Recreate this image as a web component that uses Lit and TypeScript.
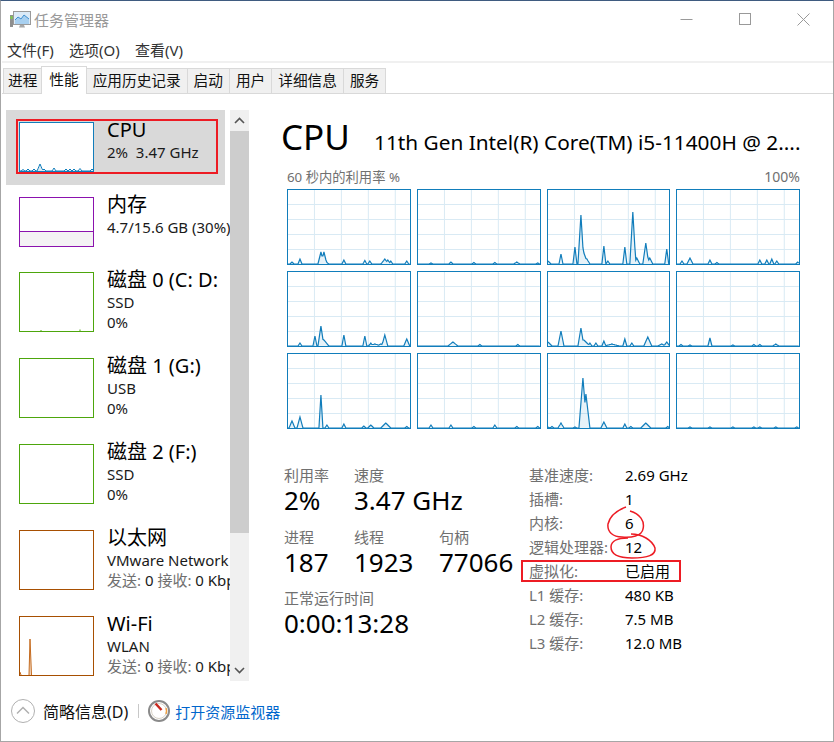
import { LitElement, html, css, svg } from "lit";
import { customElement } from "lit/decorators.js";

// [x, height, half width] of each spike on a sparkline, in chart pixels
type Peak = [number, number, number?];

const CORES: Peak[][] = [
  [[4, 2], [12, 5], [33, 12, 3], [36, 12, 3], [39, 1.5], [56, 4], [77, 3.5], [82, 3], [97, 5, 4], [100, 4, 3], [103, 3], [119, 3]],
  [[13, 1], [33, 2], [56, 1.5], [77, 1.5], [99, 2, 3], [120, 1]],
  [[0, 3, 3], [13, 10], [27, 17], [33, 49, 3], [36, 11, 4], [39, 5, 3], [56, 18], [60, 3], [77, 17], [85, 52, 3], [89, 6, 3], [98, 21, 3], [102, 6, 3], [119, 15]],
  [[5, 3], [13, 6, 3], [33, 4], [40, 1.5], [83, 4], [90, 4], [95, 5], [100, 3], [121, 2]],
  [[12, 3], [27, 10], [33, 20, 3], [36, 6, 5], [56, 11], [77, 10], [83, 3], [87, 2, 8], [93, 2, 4], [97, 11, 3], [119, 7, 3]],
  [[35, 4, 5], [62, 1.5], [100, 1.5]],
  [[0, 4, 4], [13, 15, 3], [33, 18, 3], [36, 6, 6], [42, 3], [48, 3], [56, 5], [64, 2, 8], [77, 7], [84, 3], [100, 9, 4], [114, 2, 4], [119, 4, 3]],
  [[4, 1.5], [13, 1], [33, 8], [56, 1], [77, 1.5], [83, 1.5], [99, 2, 3]],
  [[4, 7, 3], [12, 11, 3], [33, 33, 2], [39, 3], [56, 4], [76, 2], [83, 3, 3], [98, 5, 5], [119, 1.5]],
  [[13, 3], [33, 3], [56, 1.5], [77, 3], [99, 1.5], [120, 1.5]],
  [[0, 1], [4, 1.5], [13, 5, 3], [27, 1], [35, 50, 4], [38, 34, 4], [56, 6, 3], [77, 4], [83, 1.5], [98, 5, 5], [120, 1.5]],
  [[13, 1], [33, 1], [56, 1], [77, 1], [83, 1], [99, 1], [120, 1]],
];

const SIDE_ITEMS = [
  { kind: "cpu", name: "CPU", lines: ["2%  3.47 GHz"] },
  { kind: "mem", name: "内存", lines: ["4.7/15.6 GB (30%)"] },
  { kind: "disk", name: "磁盘 0 (C: D:", lines: ["SSD", "0%"] },
  { kind: "disk", name: "磁盘 1 (G:)", lines: ["USB", "0%"] },
  { kind: "disk", name: "磁盘 2 (F:)", lines: ["SSD", "0%"] },
  { kind: "net", name: "以太网", lines: ["VMware Network Adapter"], rate: true },
  { kind: "net", name: "Wi-Fi", lines: ["WLAN"], rate: true },
];

const SPECS = [
  ["基准速度:", "2.69 GHz"],
  ["插槽:", "1"],
  ["内核:", "6"],
  ["逻辑处理器:", "12"],
  ["虚拟化:", "已启用"],
  ["L1 缓存:", "480 KB"],
  ["L2 缓存:", "7.5 MB"],
  ["L3 缓存:", "12.0 MB"],
];

const STATS = [
  ["利用率", "2%"],
  ["速度", "3.47 GHz"],
  ["", ""],
  ["进程", "187"],
  ["线程", "1923"],
  ["句柄", "77066"],
];

function sparkPoints(peaks: Peak[], w: number, h: number): string {
  const pts: string[] = [];
  for (let x = 0; x <= w; x++) {
    let v = 0;
    for (const [px, ph, pw = 2] of peaks) {
      v = Math.max(v, ph * (1 - Math.abs(x - px) / pw));
    }
    pts.push(`${x},${(h - v).toFixed(1)}`);
  }
  return pts.join(" ");
}

function coreChart(peaks: Peak[]) {
  const w = 122;
  const h = 74;
  const points = sparkPoints(peaks, w, h);
  return html`<div class="core">
    <svg viewBox="0 0 ${w} ${h}" preserveAspectRatio="none">
      ${[15, 30, 45, 60].map((y) => svg`<line class="gl" x1="0" x2=${w} y1=${y - 0.5} y2=${y - 0.5}></line>`)}
      ${[27, 54, 81, 108].map((x) => svg`<line class="gl" y1="0" y2=${h} x1=${x - 0.5} x2=${x - 0.5}></line>`)}
      <polygon class="area" points="0,${h} ${points} ${w},${h}"></polygon>
      <polyline class="spark" points=${points}></polyline>
    </svg>
  </div>`;
}

function thumb(kind: string, index: number) {
  if (kind === "cpu") {
    const peaks: Peak[] = [[3, 1.5], [8, 2], [14, 2], [20, 7, 3], [24, 2], [34, 3], [46, 2], [50, 2], [54, 2], [60, 2.5], [72, 2]];
    const p = sparkPoints(peaks, 73, 48);
    return html`<div class="thumb cpu">
      <svg viewBox="0 0 73 48" preserveAspectRatio="none">
        <polygon points="0,48 ${p} 73,48" fill="#d9eaf4"></polygon>
        <polyline points=${p} fill="none" stroke="#117dbb"></polyline>
      </svg>
    </div>`;
  }
  if (kind === "mem") {
    return html`<div class="thumb mem"><div class="mem-used"></div></div>`;
  }
  if (kind === "disk") {
    const blips = index === 2 ? "M21 58v-1M60 58v-1.5" : "";
    return html`<div class="thumb disk">
      ${blips ? html`<svg viewBox="0 0 73 58"><path d=${blips} stroke="#4da60c" fill="none"></path></svg>` : ""}
    </div>`;
  }
  return html`<div class="thumb net">
    ${index === 6
      ? html`<svg viewBox="0 0 73 58">
          <path d="M0 55l1 3M9 58L10 22 11.500 58" fill="#f0d9c4" stroke="#c46a1e"></path>
        </svg>`
      : ""}
  </div>`;
}

@customElement("app-root")
export class AppRoot extends LitElement {
  static override styles = css`
    :host {
      display: block;
      position: relative;
      width: 834px;
      height: 742px;
      font-family: "Noto Sans", "Noto Sans CJK SC", sans-serif;
      color: #000;
      background: #fff;
    }
    .window {
      box-sizing: border-box;
      width: 834px;
      height: 742px;
      display: flex;
      flex-direction: column;
      border-top: 1px solid #3f5b80;
      border-left: 1px solid #a6a6a6;
      border-right: 1px solid #a6a6a6;
      border-bottom: 1px solid #a6a6a6;
      padding-left: 1px;
      overflow: hidden;
    }
    .titlebar {
      height: 37px;
      flex: none;
      display: flex;
      align-items: center;
      padding-left: 8px;
    }
    .titlebar .app-icon {
      width: 21px;
      height: 18px;
      margin-top: 1px;
    }
    .title {
      margin-left: 3px;
      font-size: 15px;
      color: #999;
      flex: 1;
    }
    .winbtn {
      width: 58.5px;
      height: 37px;
      display: flex;
      align-items: center;
      justify-content: center;
    }
    .winbtn svg {
      width: 13px;
      height: 13px;
    }
    .menu {
      height: 23px;
      flex: none;
      display: flex;
      align-items: center;
      gap: 7px;
      padding-left: 5px;
      font-size: 15px;
      color: #333;
      border-bottom: 2px solid #f0f0f0;
      box-sizing: content-box;
    }
    .menu span {
      width: 55px;
      white-space: nowrap;
    }
    .menu span:nth-child(2) {
      width: 59px;
    }
    .tabs {
      height: 31px;
      flex: none;
      box-sizing: border-box;
      padding: 3px 0 0 1px;
      display: flex;
      align-items: flex-end;
      border-bottom: 1px solid #d9d9d9;
      font-size: 14.67px;
    }
    .tab {
      box-sizing: border-box;
      height: 25px;
      padding: 0 6px;
      line-height: 23px;
      background: #f0f0f0;
      border: 1px solid #d9d9d9;
      border-bottom: none;
      border-left: none;
      color: #111;
      white-space: nowrap;
    }
    .tab:first-child {
      border-left: 1px solid #d9d9d9;
      padding: 0 4px;
    }
    .tab.active {
      height: 28px;
      margin-bottom: -1px;
      background: #fff;
      line-height: 25px;
      border-left: 1px solid #d9d9d9;
      margin-left: -1px;
      padding: 0 7px;
    }
    .main {
      flex: none;
      height: 587px;
      display: flex;
      padding: 16px 0 0 4px;
      box-sizing: border-box;
    }
    .list {
      width: 224px;
      height: 571px;
      overflow: hidden;
      flex: none;
    }
    .item {
      width: 219px;
      display: flex;
      box-sizing: border-box;
      padding: 12px 0 0 13px;
      height: 86px;
    }
    .item.short {
      height: 75px;
    }
    .item.selected {
      background: #d9d9d9;
    }
    .thumb {
      flex: none;
      box-sizing: border-box;
      width: 75px;
      height: 60px;
      border: 1px solid;
      background: #fff;
      position: relative;
    }
    .thumb svg {
      display: block;
      width: 100%;
      height: 100%;
    }
    .thumb.cpu {
      height: 50px;
      border-color: #117dbb;
    }
    .thumb.mem {
      height: 50px;
      border-color: #8b12ae;
      display: flex;
      flex-direction: column;
      justify-content: flex-end;
    }
    .mem-used {
      height: 14px;
      background: #f4f2f4;
      border-top: 1px solid #8b12ae;
    }
    .thumb.disk {
      border-color: #4da60c;
    }
    .thumb.net {
      border-color: #a74f01;
    }
    .info {
      margin: -4px 0 0 13px;
      white-space: nowrap;
    }
    .name {
      font-size: 20px;
      line-height: 24px;
    }
    .line {
      font-size: 15px;
      line-height: 20px;
      color: #1a1a1a;
      white-space: pre;
    }
    .grey {
      color: #707070;
    }
    .scroll {
      flex: none;
      width: 19px;
      height: 571px;
      background: #f0f0f0;
      display: flex;
      flex-direction: column;
    }
    .arrow {
      height: 21px;
      flex: none;
      display: flex;
      align-items: center;
      justify-content: center;
    }
    .arrow svg {
      width: 11px;
      height: 7px;
    }
    .bar {
      height: 402px;
      flex: none;
      background: #cdcdcd;
    }
    .gap {
      flex: 1;
    }
    .panel {
      flex: 1;
      padding-left: 35px;
      min-width: 0;
    }
    .head {
      height: 56px;
      display: flex;
      align-items: baseline;
      white-space: nowrap;
      margin-left: -3px;
    }
    .head .big {
      font-size: 35px;
      line-height: 54px;
      width: 93px;
    }
    .head .model {
      font-size: 20.8px;
    }
    .caption {
      height: 23px;
      margin-left: 3px;
      width: 513px;
      display: flex;
      justify-content: space-between;
      font-size: 13.3px;
      line-height: 22px;
      color: #707070;
    }
    .caption .max {
      font-size: 14px;
    }
    .cores {
      margin-left: 3px;
      width: 513px;
      display: grid;
      grid-template-columns: repeat(4, 1fr);
      grid-auto-rows: 76px;
      gap: 6px;
    }
    .core {
      border: 1px solid #117dbb;
      box-sizing: border-box;
      background: #fff;
    }
    .core svg {
      display: block;
      width: 100%;
      height: 100%;
    }
    .gl {
      stroke: #d9eaf4;
      stroke-width: 1;
      vector-effect: non-scaling-stroke;
    }
    .area {
      fill: rgba(17, 125, 187, 0.1);
    }
    .spark {
      fill: none;
      stroke: #117dbb;
      stroke-width: 1.2;
      vector-effect: non-scaling-stroke;
    }
    .bottom {
      margin-top: 34px;
      display: flex;
    }
    .stats {
      width: 245px;
      padding-top: 2px;
      display: grid;
      grid-template-columns: 70px 85px auto;
      grid-auto-rows: 61.5px;
      align-content: start;
    }
    .stat-label {
      font-size: 15px;
      line-height: 20px;
      color: #707070;
      white-space: nowrap;
    }
    .stat-value {
      font-size: 26px;
      line-height: 30px;
      white-space: nowrap;
    }
    .uptime {
      grid-column: 1 / span 3;
    }
    .specs {
      display: grid;
      grid-template-columns: 96px auto;
      grid-auto-rows: 24px;
      font-size: 15px;
      line-height: 24px;
      white-space: nowrap;
    }
    .specs .k {
      color: #707070;
    }
    .footer {
      flex: 1;
      display: flex;
      align-items: center;
      padding: 0 0 0 9px;
      font-size: 15px;
    }
    .chev {
      width: 24px;
      height: 24px;
      flex: none;
    }
    .brief {
      margin-left: 8px;
      color: #111;
      font-size: 16px;
    }
    .divider {
      width: 1px;
      height: 14px;
      background: #c8c8c8;
      margin: 0 9px 0 10px;
    }
    .gauge {
      width: 22px;
      height: 22px;
      flex: none;
    }
    .link {
      margin-left: 5px;
      color: #0066cc;
    }
    .marks {
      position: absolute;
      left: 0;
      top: 0;
      width: 834px;
      height: 742px;
      pointer-events: none;
    }
  `;

  override render() {
    return html`
      <div class="window">
        ${this._titlebar()}
        <div class="menu"><span>文件(F)</span><span>选项(O)</span><span>查看(V)</span></div>
        <div class="tabs">
          ${["进程", "性能", "应用历史记录", "启动", "用户", "详细信息", "服务"].map(
            (t, i) => html`<div class="tab ${i === 1 ? "active" : ""}">${t}</div>`
          )}
        </div>
        <div class="main">
          <div class="list">${SIDE_ITEMS.map((it, i) => this._sideItem(it, i))}</div>
          <div class="scroll">
            <div class="arrow">
              <svg viewBox="0 0 11 7"><path d="M1 6l4.500-4.500L10 6" fill="none" stroke="#555" stroke-width="1.600"></path></svg>
            </div>
            <div class="bar"></div>
            <div class="gap"></div>
            <div class="arrow">
              <svg viewBox="0 0 11 7"><path d="M1 1l4.500 4.500L10 1" fill="none" stroke="#555" stroke-width="1.600"></path></svg>
            </div>
          </div>
          <div class="panel">
            <div class="head">
              <span class="big">CPU</span>
              <span class="model">11th Gen Intel(R) Core(TM) i5-11400H @ 2....</span>
            </div>
            <div class="caption"><span>60 秒内的利用率 %</span><span class="max">100%</span></div>
            <div class="cores">${CORES.map((c) => coreChart(c))}</div>
            <div class="bottom">
              <div class="stats">
                ${STATS.map(
                  ([k, v]) => html`<div>
                    <div class="stat-label">${k}</div>
                    <div class="stat-value">${v}</div>
                  </div>`
                )}
                <div class="uptime">
                  <div class="stat-label">正常运行时间</div>
                  <div class="stat-value">0:00:13:28</div>
                </div>
              </div>
              <div class="specs">
                ${SPECS.map(([k, v]) => html`<div class="k">${k}</div><div>${v}</div>`)}
              </div>
            </div>
          </div>
        </div>
        ${this._footer()}
      </div>
      <svg class="marks" viewBox="0 0 834 742">
        <g fill="none" stroke="#ed1c24">
          <rect x="17" y="120" width="200" height="53" stroke-width="2"></rect>
          <rect x="522" y="561" width="158" height="20" stroke-width="2"></rect>
          <path
            d="M626 507C618 510 610 515 608 524C607 532 613 537 622 537C631 538 642 536 643 529C645 521 640 514 630 511"
            stroke-width="1.500"
          ></path>
          <path
            d="M631 534C642 534 652 540 655 548C656 555 648 558 632 558C620 558 611 555 611 547C611 541 618 538 628 538"
            stroke-width="1.500"
          ></path>
        </g>
      </svg>
    `;
  }

  private _titlebar() {
    return html`<div class="titlebar">
      <svg class="app-icon" viewBox="0 0 21 18">
        <rect x="0" y="4" width="3" height="12" fill="#8f8f8f"></rect>
        <rect x="0.500" y="5" width="2" height="3" fill="#7ecb4a"></rect>
        <rect x="3.500" y="0.500" width="17" height="13" fill="#dbeaf7" stroke="#9a9a9a"></rect>
        <path d="M5 9l3-3 3 2 3-4 5 4v5H5z" fill="#a8d0f0"></path>
        <path d="M5 9l3-3 3 2 3-4 5 4" fill="none" stroke="#3f8fd0"></path>
        <path d="M10 14h4l1 2.500H9z" fill="#a8a8a8"></path>
      </svg>
      <span class="title">任务管理器</span>
      <div class="winbtn">
        <svg viewBox="0 0 13 13"><path d="M0.500 6.500h12" stroke="#999" fill="none"></path></svg>
      </div>
      <div class="winbtn">
        <svg viewBox="0 0 13 13"><rect x="0.500" y="0.500" width="11" height="11" fill="none" stroke="#999"></rect></svg>
      </div>
      <div class="winbtn">
        <svg viewBox="0 0 13 13"><path d="M0.500 0.500l12 12M12.500 0.500l-12 12" stroke="#999" fill="none"></path></svg>
      </div>
    </div>`;
  }

  private _sideItem(it: (typeof SIDE_ITEMS)[number], i: number) {
    const short = it.kind === "cpu" || it.kind === "mem";
    return html`<div class="item ${short ? "short" : ""} ${i === 0 ? "selected" : ""}">
      ${thumb(it.kind, i)}
      <div class="info">
        <div class="name">${it.name}</div>
        ${it.lines.map((l) => html`<div class="line">${l}</div>`)}
        ${it.rate
          ? html`<div class="line"><span class="grey">发送:</span> 0 <span class="grey">接收:</span> 0 Kbps</div>`
          : ""}
      </div>
    </div>`;
  }

  private _footer() {
    return html`<div class="footer">
      <svg class="chev" viewBox="0 0 24 24">
        <circle cx="12" cy="12" r="11.500" fill="#fff" stroke="#b0b0b0"></circle>
        <path d="M6 14.500l6-6 6 6" fill="none" stroke="#b0b0b0" stroke-width="1.500"></path>
      </svg>
      <span class="brief">简略信息(D)</span>
      <span class="divider"></span>
      <svg class="gauge" viewBox="0 0 22 22">
        <circle cx="11" cy="11" r="10" fill="#fff" stroke="#8a8a8a" stroke-width="2"></circle>
        <circle cx="11" cy="11" r="7.500" fill="#fff" stroke="#d8d2c6"></circle>
        <path d="M7.500 3.500L13.500 10" stroke="#c8281e" stroke-width="2.500" fill="none"></path>
        <path d="M18 8a8 8 0 0 1 0 6" stroke="#f0a040" stroke-width="1.500" fill="none"></path>
      </svg>
      <span class="link">打开资源监视器</span>
    </div>`;
  }
}

declare global {
  interface HTMLElementTagNameMap {
    "app-root": AppRoot;
  }
}
